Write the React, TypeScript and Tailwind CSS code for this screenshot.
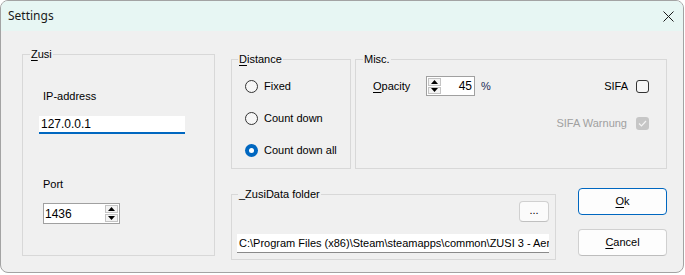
import React from "react";

function Tri({ up }: { up: boolean }) {
  return (
    <svg width="7" height="4" viewBox="0 0 7 4">
      <path d={up ? "M3.5 0 L7 4 L0 4 Z" : "M0 0 L7 0 L3.5 4 Z"} fill="#000" />
    </svg>
  );
}

function Spinner() {
  return (
    <div className="flex flex-col w-[15px] h-full gap-px p-px">
      <div className="flex-1 flex items-center justify-center border border-[#c4c4c4] bg-[#f3f3f3]">
        <Tri up />
      </div>
      <div className="flex-1 flex items-center justify-center border border-[#c4c4c4] bg-[#f3f3f3]">
        <Tri up={false} />
      </div>
    </div>
  );
}

function Radio({ checked, label }: { checked?: boolean; label: string }) {
  return (
    <div className="flex items-center h-[13px]">
      {checked ? (
        <div className="w-[13px] h-[13px] rounded-full bg-[#0067c0] flex items-center justify-center">
          <div className="w-[5px] h-[5px] rounded-full bg-white" />
        </div>
      ) : (
        <div className="w-[13px] h-[13px] rounded-full border border-[#333333] bg-[#f6f6f6]" />
      )}
      <span className="ml-[6px] leading-[13px]">{label}</span>
    </div>
  );
}

export default function App() {
  return (
    <div className="w-[685px] h-[275px] bg-white font-['Liberation_Sans',Arial,sans-serif] text-[11px] text-black">
      <div className="w-[684px] h-[273px] border border-[#a3a3a3] rounded-[8px] overflow-hidden bg-[#f0f0f0] flex flex-col">
        {/* Title bar */}
        <div className="h-[30px] shrink-0 bg-[#e7f6f3] flex items-center justify-between pl-[7px] pr-[9px]">
          <span className="font-['Segoe_UI','Noto_Sans',sans-serif] text-[12px] text-[#1a1a1a]">Settings</span>
          <svg width="11" height="11" viewBox="0 0 11 11">
            <path d="M0.5 0.5 L10.5 10.5 M10.5 0.5 L0.5 10.5" stroke="#1a1a1a" strokeWidth="1" />
          </svg>
        </div>

        {/* Body */}
        <div className="flex flex-row items-start pl-[21px]">
          {/* Zusi group */}
          <div className="relative mt-[23px] w-[193px] h-[202px] border border-[#d8d8d8] shrink-0">
            <span className="absolute left-[7px] -top-[7px] px-[1px] bg-[#f0f0f0] leading-[13px]">
              <span className="underline underline-offset-[2px]">Z</span>usi
            </span>
            <div className="flex flex-col pl-[20px]">
              <span className="mt-[35px] leading-[13px]">IP-address</span>
              <div className="mt-[13px] -ml-[4px] w-[146px] h-[18px] bg-white border-b-2 border-[#0067c0] pl-[2px] flex items-center text-[12px] leading-[16px]">
                127.0.0.1
              </div>
              <span className="mt-[44px] leading-[13px]">Port</span>
              <div className="mt-[12px] w-[77px] h-[21px] border border-[#a0a0a0] bg-white flex">
                <div className="flex-1 flex items-center pl-[1px] text-[12px]">1436</div>
                <Spinner />
              </div>
            </div>
          </div>

          {/* Right column */}
          <div className="ml-[16px] mt-[28px] flex flex-col">
            <div className="flex flex-row">
              {/* Distance */}
              <div className="relative w-[120px] h-[110px] border border-[#d8d8d8]">
                <span className="absolute left-[6px] -top-[7px] px-[1px] bg-[#f0f0f0] leading-[13px]">
                  <span className="underline underline-offset-[2px]">D</span>istance
                </span>
                <div className="flex flex-col pl-[13px]">
                  <div className="mt-[20px]">
                    <Radio label="Fixed" />
                  </div>
                  <div className="mt-[19px]">
                    <Radio label="Count down" />
                  </div>
                  <div className="mt-[19px]">
                    <Radio checked label="Count down all" />
                  </div>
                </div>
              </div>

              {/* Misc */}
              <div className="relative ml-[4px] w-[312px] h-[110px] border border-[#d8d8d8]">
                <span className="absolute left-[7px] -top-[7px] px-[1px] bg-[#f0f0f0] leading-[13px]">Misc.</span>
                <div className="flex flex-col pl-[17px] pr-[17px]">
                  <div className="mt-[16px] h-[20px] flex items-center">
                    <span className="w-[53px]">
                      <span className="underline underline-offset-[2px]">O</span>pacity
                    </span>
                    <div className="w-[49px] h-[20px] border border-[#a0a0a0] bg-white flex">
                      <Spinner />
                      <div className="flex-1 flex items-center justify-end pr-[2px] text-[12px]">45</div>
                    </div>
                    <span className="ml-[6px] text-[#1a2a55]">%</span>
                    <span className="ml-auto">SIFA</span>
                    <div className="ml-[8px] w-[13px] h-[13px] rounded-[3px] border border-[#333333] bg-[#f6f6f6]" />
                  </div>
                  <div className="mt-[21px] h-[13px] flex items-center justify-end">
                    <span className="text-[#a0a0a0]">SIFA Warnung</span>
                    <div className="ml-[9px] w-[13px] h-[13px] rounded-[3px] bg-[#c6c6c6] flex items-center justify-center">
                      <svg width="9" height="7" viewBox="0 0 9 7">
                        <path d="M1 3.5 L3.5 6 L8 1" stroke="#f4f4f4" strokeWidth="1.2" fill="none" />
                      </svg>
                    </div>
                  </div>
                </div>
              </div>
            </div>

            {/* Bottom row */}
            <div className="mt-[19px] flex flex-row items-start">
              <div className="relative mt-[6px] w-[325px] h-[66px] border border-[#d8d8d8]">
                <span className="absolute left-[6px] -top-[7px] px-[1px] bg-[#f0f0f0] leading-[13px]">_ZusiData folder</span>
                <div className="flex flex-col items-end pr-[6px]">
                  <div className="mt-[6px] w-[30px] h-[21px] rounded-[4px] border border-[#d0d0d0] border-b-[#c0c0c0] bg-[#fbfbfb] flex items-center justify-center pb-[2px]">
                    ...
                  </div>
                </div>
                <div className="mt-[12px] ml-[5px] w-[312px] h-[19px] bg-white border-b border-[#8a8a8a] overflow-hidden whitespace-nowrap pl-[2px] flex items-center text-[11px]">
                  C:\Program Files (x86)\Steam\steamapps\common\ZUSI 3 - Aero
                </div>
              </div>

              <div className="ml-[22px] flex flex-col">
                <div className="w-[89px] h-[27px] rounded-[4px] border border-[#0067c0] bg-[#fdfdfd] flex items-center justify-center">
                  <span>
                    <span className="underline underline-offset-[2px]">O</span>k
                  </span>
                </div>
                <div className="mt-[14px] w-[89px] h-[27px] rounded-[4px] border border-[#d0d0d0] border-b-[#bdbdbd] bg-[#fdfdfd] flex items-center justify-center">
                  <span>
                    <span className="underline underline-offset-[2px]">C</span>ancel
                  </span>
                </div>
              </div>
            </div>
          </div>
        </div>
      </div>
    </div>
  );
}
